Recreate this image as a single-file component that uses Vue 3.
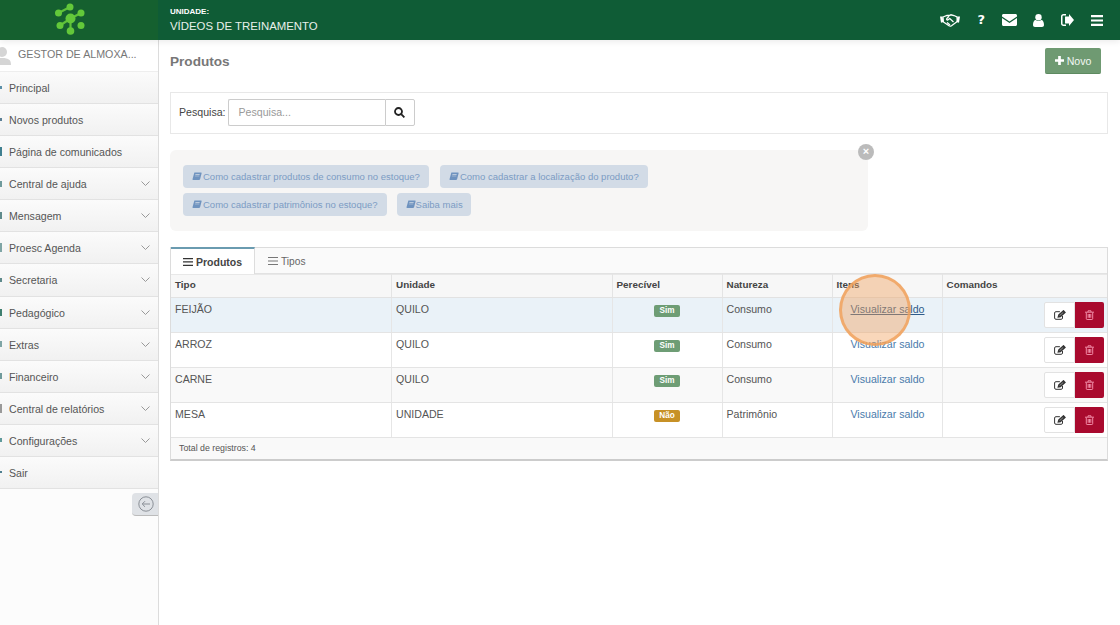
<script setup>
const menu = [
  { t: 'Principal', c: '#5b8fa8', h: 3 }, { t: 'Novos produtos', c: '#5b7f95', h: 3 }, { t: 'Página de comunicados', c: '#3f7f8f', h: 9 },
  { t: 'Central de ajuda', c: '#6f9a9b', h: 6, sub: true }, { t: 'Mensagem', c: '#5f8a8b', h: 7, sub: true }, { t: 'Proesc Agenda', c: '#7fa5a5', h: 9, sub: true },
  { t: 'Secretaria', c: '#5f8a8b', h: 4, sub: true }, { t: 'Pedagógico', c: '#3f7f6f', h: 7, sub: true }, { t: 'Extras', c: '#7fa5a5', h: 6, sub: true },
  { t: 'Financeiro', c: '#6f9a9b', h: 6, sub: true }, { t: 'Central de relatórios', c: '#999', h: 9, sub: true }, { t: 'Configurações', c: '#5f9a9b', h: 4, sub: true },
  { t: 'Sair', c: '#4f7f8f', h: 2 },
]
const rows = [
  { tipo: 'FEIJÃO', un: 'QUILO', per: 'Sim', nat: 'Consumo' },
  { tipo: 'ARROZ', un: 'QUILO', per: 'Sim', nat: 'Consumo' },
  { tipo: 'CARNE', un: 'QUILO', per: 'Sim', nat: 'Consumo' },
  { tipo: 'MESA', un: 'UNIDADE', per: 'Não', nat: 'Patrimônio' },
]
const book = 'M3.500 .5h9c.8 0 1.100.6.9 1.300L11.300 9.800c-.2.700-.7 1.200-1.600 1.200H2c-1 0-1.500-.7-1.200-1.600L3 1.500C3.100 1 3.200.7 3.500.5zM4.800 3l-.2.8h6l.2-.8zM4.300 5l-.2.800h6l.2-.8z'
</script>

<template>
  <div class="page">
    <header class="top">
      <div class="brand">
        <svg width="32" height="36" viewBox="0 0 32 36">
          <g stroke="#5fc03a" stroke-width="2.200" fill="none">
            <path d="M4.500 11 16 5M27 11 16.500 16.500 6 23.500M16.500 16.500V29" />
          </g>
          <g fill="#63c83a">
            <circle cx="16" cy="5" r="3.500" /><circle cx="4.500" cy="11" r="3.500" /><circle cx="27" cy="11" r="3.500" />
            <circle cx="16.500" cy="16.500" r="5" /><circle cx="6" cy="23.500" r="3.500" /><circle cx="27" cy="23.500" r="3.500" />
            <circle cx="16.500" cy="29" r="3.800" />
          </g>
        </svg>
      </div>
      <div class="unit">
        <small>UNIDADE:</small>
        <span>VÍDEOS DE TREINAMENTO</span>
      </div>
      <nav class="topicons">
        <svg width="20" height="13" viewBox="0 0 20 13">
          <path fill="#fff" d="M0 2.500h2.500L3.500 8 1 8.800zM20 2.500h-2.500L16.500 8l2.500.8z" />
          <path fill="none" stroke="#fff" stroke-width="1.300" d="M3 3 7 1.500h2l2-.7 3 .7 3 1.500.3 4.500-5.800 4.200c-1 .6-1.800.6-2.500.1L3.400 8z" />
          <path fill="none" stroke="#fff" stroke-width="1.300" d="M13.500 8 9.800 4.500 8 5.800c-1 .5-1.700-.3-1.200-1.200L9 2.300M7 8.500l3 2.500" />
        </svg>
        <span class="q">?</span>
        <svg class="mail" width="15" height="12" viewBox="0 0 15 12"><path fill="#fff" d="M0 2.400V1.500C0 .6.700 0 1.500 0h12c.8 0 1.500.6 1.500 1.500v.9L7.500 7.500zM0 4l7.500 5L15 4v6.500c0 .8-.7 1.500-1.500 1.500h-12C.7 12 0 11.300 0 10.500z" /></svg>
        <svg class="person" width="11" height="13" viewBox="0 0 11 13"><circle cx="5.500" cy="3.200" r="3.200" fill="#fff" /><path fill="#fff" d="M0 11c0-3 1-5 2.800-5 .7.600 1.700 1 2.700 1s2-.4 2.700-1C10 6 11 8 11 11c0 1.200-.8 2-2 2H2c-1.200 0-2-.8-2-2z" /></svg>
        <svg width="13" height="12" viewBox="0 0 13 12"><path fill="#fff" d="M8 2.500V0l5 6-5 6V9.500H4v-7zM0 2.500C0 1 1 0 2.500 0H5v1.500H2.500c-.6 0-1 .4-1 1v7c0 .6.400 1 1 1H5V12H2.500C1 12 0 11 0 9.500z" /></svg>
        <svg width="12" height="11" viewBox="0 0 12 11"><path fill="#fff" d="M0 0h12v2.200H0zM0 4.400h12v2.200H0zM0 8.800h12V11H0z" /></svg>
      </nav>
    </header>

    <div class="body">
      <aside class="side">
        <div class="user">
          <svg class="avatar" width="12" height="18" viewBox="0 0 12 18">
            <circle cx="2" cy="5" r="5" fill="#d5d5d5" /><path fill="#d5d5d5" d="M-8 18c0-5 3-7 10-7s9 2 9 7z" />
          </svg>
          <span>GESTOR DE ALMOXA...</span>
        </div>
        <ul class="menu">
          <li v-for="m in menu" :key="m.t">
            <i class="dot" :style="{ background: m.c, height: m.h + 'px' }"></i>
            <span class="label">{{ m.t }}</span>
            <svg v-if="m.sub" class="chev" width="9" height="5" viewBox="0 0 9 5" fill="none" stroke="#999"><path d="M.5.500 4.500 4.500 8.500.500" /></svg>
          </li>
        </ul>
        <div class="collapse">
          <button>
            <svg width="16" height="16" viewBox="0 0 16 16" fill="none" stroke="#8a8f96"><circle cx="8" cy="8" r="7.200" /><path d="M12 8H4.500M7 5.200 4.200 8 7 10.800" /></svg>
          </button>
        </div>
      </aside>

      <main class="main">
        <div class="head">
          <h1>Produtos</h1>
          <button class="novo">
            <svg width="9" height="9" viewBox="0 0 10 10"><path fill="#fff" d="M3.500 0h3v3.500H10v3H6.500V10h-3V6.500H0v-3h3.500z" /></svg>
            Novo
          </button>
        </div>

        <section class="search">
          <label>Pesquisa:</label>
          <div class="input">Pesquisa...</div>
          <button class="go">
            <svg width="11" height="11" viewBox="0 0 11 11" fill="none" stroke="#222" stroke-width="1.800"><circle cx="4.500" cy="4.500" r="3.500" /><path d="m7.200 7.200 3.200 3.200" /></svg>
          </button>
        </section>

        <section class="tips">
          <span class="close">×</span>
          <div class="tiprow">
            <a><svg width="10" height="9" viewBox="0 0 14 12"><path :d="book" fill="#6f93bf" /></svg> Como cadastrar produtos de consumo no estoque?</a>
            <a><svg width="10" height="9" viewBox="0 0 14 12"><path :d="book" fill="#6f93bf" /></svg> Como cadastrar a localização do produto?</a>
          </div>
          <div class="tiprow">
            <a><svg width="10" height="9" viewBox="0 0 14 12"><path :d="book" fill="#6f93bf" /></svg> Como cadastrar patrimônios no estoque?</a>
            <a class="tight"><svg width="10" height="9" viewBox="0 0 14 12"><path :d="book" fill="#6f93bf" /></svg>Saiba mais</a>
          </div>
        </section>

        <section class="panel">
          <div class="tabs">
            <div class="tab active"><svg width="10" height="8" viewBox="0 0 10 8"><path fill="#333" d="M0 0h10v1.300H0zM0 3.300h10v1.300H0zM0 6.700h10V8H0z" /></svg>Produtos</div>
            <div class="tab"><svg width="10" height="8" viewBox="0 0 10 8"><path fill="#777" d="M0 0h10v1H0zM0 3.500h10v1H0zM0 7h10v1H0z" /></svg>Tipos</div>
          </div>
          <table>
            <thead>
              <tr><th class="c1">Tipo</th><th class="c2">Unidade</th><th class="c3">Perecível</th><th class="c4">Natureza</th><th class="c5">Itens</th><th>Comandos</th></tr>
            </thead>
            <tbody>
              <tr v-for="(r, i) in rows" :key="r.tipo" :class="{ hover: i === 0, odd: i === 2 }">
                <td>{{ r.tipo }}</td>
                <td>{{ r.un }}</td>
                <td class="mid"><span class="badge" :class="r.per === 'Sim' ? 'yes' : 'no'">{{ r.per }}</span></td>
                <td>{{ r.nat }}</td>
                <td class="link"><a :class="{ under: i === 0 }">Visualizar saldo</a></td>
                <td class="cmd">
                  <div class="btns">
                    <button class="edit"><svg width="12" height="10" viewBox="0 0 12 10" fill="none" stroke="#333"><path d="M8.500 6v2c0 .8-.5 1.300-1.300 1.300H2C1.100 9.300.6 8.800.6 8V3c0-.8.500-1.300 1.300-1.300h4" /><path stroke-width="1.600" d="M4.500 6.800 5 5l4.500-4 1.300 1.400-4.500 4z" /></svg></button>
                    <button class="del"><svg width="9" height="10" viewBox="0 0 9 10" fill="none" stroke="#f08aa5"><path d="M1.300 2.500v6.200c0 .5.300.8.800.8h4.800c.5 0 .8-.3.800-.8V2.500M0 2.200h9M3 2V.8h3V2M3.200 4v3.800M4.500 4v3.800M5.800 4v3.800" /></svg></button>
                  </div>
                </td>
              </tr>
            </tbody>
          </table>
          <footer class="total">Total de registros: 4</footer>
          <span class="spot"></span>
        </section>
      </main>
    </div>
  </div>
</template>

<style>
html, body { margin: 0; background: #fff; }
</style>

<style scoped>
.page { width: 1120px; height: 625px; overflow: hidden; font-family: "Liberation Sans", Arial, sans-serif; font-size: 10.600px; color: #444; display: flex; flex-direction: column; }
.top { height: 40px; flex: none; display: flex; align-items: center; background: #0f5c36; color: #fff; position: relative; z-index: 2; box-shadow: 0 2px 6px rgba(0,0,0,.08); }
.brand { width: 158px; height: 40px; background: #15602f; display: flex; align-items: center; justify-content: flex-start; padding-left: 54px; box-sizing: border-box; flex: none; }
.unit { display: flex; flex-direction: column; padding-left: 12px; gap: 2px; }
.unit small { font-size: 8px; font-weight: 700; line-height: 10px; }
.unit span { font-size: 11.400px; line-height: 14px; color: #e8f0ea; }
.topicons { margin-left: auto; display: flex; align-items: center; padding-right: 17px; }
.topicons > * { margin-left: 17px; }
.topicons > .person { margin-left: 16px; }
.q { font-size: 13px; font-weight: 700; font-family: "DejaVu Sans", sans-serif; line-height: 14px; }

.body { flex: 1; display: flex; min-height: 0; }
.side { width: 159px; flex: none; box-sizing: border-box; border-right: 1px solid #dcdcdc; background: #fcfcfc; color: #555; }
.user { height: 32px; box-sizing: border-box; padding-bottom: 4px; display: flex; align-items: center; gap: 6px; color: #777; font-size: 10.700px; border-bottom: 1px solid #eee; background: #fff; }
.avatar { margin-top: 4px; }
.menu { list-style: none; margin: 0; padding: 0; }
.menu li { height: 32.080px; box-sizing: border-box; border-bottom: 1px solid #e2e2e2; background: linear-gradient(#fbfbfb, #f1f1f1); display: flex; align-items: center; font-size: 10.600px; position: relative; }
.label { align-self: flex-start; margin-top: 10px; line-height: 12px; }
.dot { width: 2px; margin-right: 7px; flex: none; }
.chev { position: absolute; right: 8px; top: 13px; }
.collapse { display: flex; justify-content: flex-end; padding-top: 4px; }
.collapse button { width: 26px; height: 23px; padding: 0 0 0 6px; border: 0; background: #dfe2e6; border-radius: 4px 0 0 4px; border-bottom: 1px solid #bbb; display: flex; align-items: center; }

.main { flex: 1; min-width: 0; padding: 8px 12px 0 11px; position: relative; }
.head { display: flex; justify-content: space-between; align-items: flex-start; height: 44px; padding-right: 7px; }
h1 { margin: 0; font-size: 13.600px; line-height: 27px; color: #777; font-weight: 700; }
.novo { width: 56px; height: 26px; border: 0; border-bottom: 1px solid #5d8a60; border-radius: 2px; background: #6f9a72; color: #f2f7f2; font: 10.600px "Liberation Sans", sans-serif; display: flex; align-items: center; justify-content: center; gap: 3px; padding: 0; }

.search { height: 42px; box-sizing: border-box; border: 1px solid #e8e8e8; display: flex; align-items: center; padding: 0 0 2px 8px; color: #444; }
.search label { font-size: 10.600px; margin-right: 2px; }
.input { width: 157px; height: 27px; box-sizing: border-box; border: 1px solid #ccc; border-right: 0; padding-left: 10px; line-height: 25px; color: #999; font-size: 10.600px; border-radius: 2px 0 0 2px; }
.go { width: 30px; height: 27px; border: 1px solid #ccc; background: #fff; padding: 0; display: flex; align-items: center; justify-content: center; border-radius: 0 2px 2px 0; }

.tips { position: relative; margin-top: 16px; width: 698px; height: 81px; box-sizing: border-box; padding: 15px 13px 0; background: #f7f6f5; border-radius: 6px; }
.tiprow { display: flex; gap: 11px; margin-bottom: 5px; }
.tiprow a { height: 23px; display: flex; align-items: center; gap: 1px; padding: 0 9px; background: #d2dbe6; border-radius: 4px; color: #7c9cc4; font-size: 9.530px; white-space: nowrap; }
.tiprow a.tight { gap: 0; margin-left: -1px; padding-right: 8px; }
.close { position: absolute; right: -6px; top: -6px; width: 16px; height: 16px; border-radius: 50%; background: #bbb; color: #fff; text-align: center; line-height: 15px; font-size: 11px; font-weight: 700; }

.panel { position: relative; margin-top: 16px; border: 1px solid #dcdcdc; border-bottom: 2px solid #ccc; box-sizing: border-box; }
.tabs { height: 26px; display: flex; background: #fafafa; border-bottom: 1px solid #e2e2e2; box-sizing: border-box; }
.tab { height: 26px; display: flex; align-items: center; gap: 3px; padding: 0 13px; font-size: 10.200px; color: #666; box-sizing: border-box; }
.tab svg { flex: none; }
.tab.active { width: 84px; height: 27px; margin-top: -1px; padding: 0 12px; background: #fff; border-top: 2px solid #6a9bb0; border-right: 1px solid #ddd; font-size: 10.500px; font-weight: 700; color: #444; z-index: 1; white-space: nowrap; }
table { width: 100%; border-collapse: collapse; table-layout: fixed; font-size: 10.600px; }
th { height: 23px; padding: 0 4px 3px; text-align: left; font-size: 9.900px; color: #444; background: #f7f7f7; border-right: 1px solid #e4e4e4; border-top: 1px solid #e8e8e8; border-bottom: 1px solid #e2e2e2; box-sizing: border-box; }
th:last-child, td:last-child { border-right: 0; }
.c1, .c2 { width: 220.500px; }
.c3, .c4, .c5 { width: 110px; }
td { height: 35px; box-sizing: border-box; padding: 5px 4px 0; vertical-align: top; border-right: 1px solid #e6e6e6; border-bottom: 1px solid #e4e4e4; color: #555; line-height: 13px; }
tr.hover td { background: #eaf2f8; }
tr.odd td { background: #f9f9f9; }
.mid { text-align: center; padding-top: 5px; }
.badge { display: inline-block; height: 12px; line-height: 12px; padding: 0 5px; border-radius: 2px; color: #fff; font-size: 8.200px; font-weight: 700; }
.yes { background: #6e9d75; }
.no { background: #c79126; }
.link { padding-left: 18px; }
.link a { color: #4a7bab; white-space: nowrap; }
.under { text-decoration: underline; color: #2f5c8a !important; }
.cmd { padding: 4px 3px 0; }
.btns { display: flex; justify-content: flex-end; }
.btns button { height: 26px; padding: 0; display: flex; align-items: center; justify-content: center; }
.edit { width: 31px; background: #fff; border: 1px solid #e2e2e2; border-radius: 2px 0 0 2px; }
.del { width: 29px; background: #a90a2e; border: 0; border-radius: 0 2px 2px 0; }
.total { height: 21px; padding-left: 8px; font-size: 8.800px; line-height: 20px; color: #555; background: #f9f9f9; }
.spot { position: absolute; left: 668px; top: 26px; width: 72px; height: 72px; box-sizing: border-box; border-radius: 50%; background: rgba(241,160,90,.42); border: 3px solid rgba(240,160,90,.8); }
</style>
